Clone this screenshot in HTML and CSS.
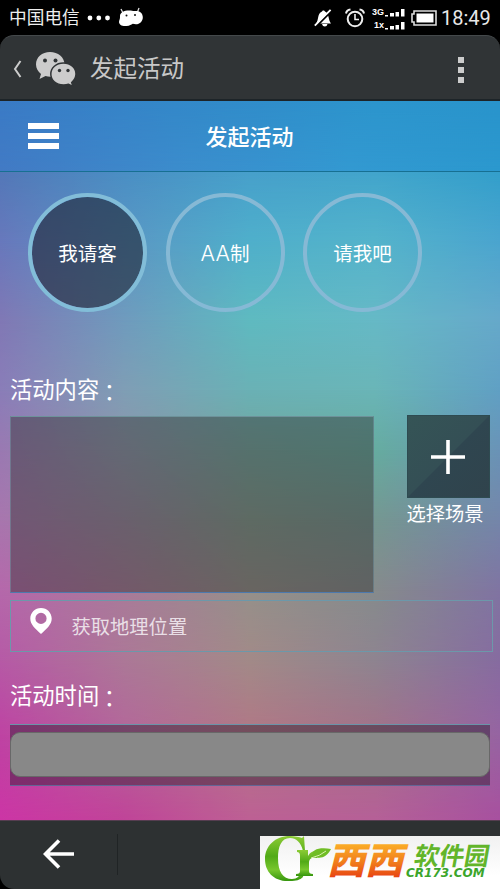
FILE: index.html
```html
<!DOCTYPE html>
<html lang="zh-CN">
<head>
<meta charset="utf-8">
<title>发起活动</title>
<link rel="stylesheet" href="styles.css">
</head>
<body>
<div class="phone">
  <div class="status">
    <span class="carrier">中国电信</span>
    <svg class="dots" width="24" height="6" viewBox="0 0 24 6" fill="#fff"><circle cx="3" cy="3" r="2.4"/><circle cx="11.8" cy="3" r="2.4"/><circle cx="20.5" cy="3" r="2.4"/></svg>
    <svg class="droid" width="26" height="20" viewBox="0 0 26 20"><path d="M3 2l2 4M21 1l-1.500 4" stroke="#ddd" stroke-width="1.300"/><path d="M2 9C2 5.500 6 3.500 11 3.500c3 0 4 .7 6 .5 5-.5 7.500 2 7.800 6 .2 4-2.800 7.300-7 7.300l-3-.5C13 17.500 12 19 8.500 19 4 19.500 1 17.500 1 15c0-2 1.300-3 1-6z" fill="#fff"/><circle cx="8.500" cy="8.500" r="1" fill="#111"/><circle cx="17" cy="8" r="1" fill="#111"/></svg>
    <div class="status-right">
      <svg class="bell" width="18" height="18" viewBox="0 0 18 18"><path d="M2 14.500C5 11 3 4.500 8 2.500 8.300 1 10.500 1 11 2.500c4.500 2 3 8.500 6 12z" fill="#fff"/><path d="M8 15h5.500q-.5 2.500-2.700 2.500T8 15z" fill="#fff"/><path d="M1.500 18L18 1.500" stroke="#000" stroke-width="2.200"/><path d="M.8 16.600L16.600.8" stroke="#fff" stroke-width="1.800"/></svg>
      <svg class="alarm" width="20" height="20" viewBox="0 0 20 20" fill="none" stroke="#eee"><circle cx="10" cy="11" r="7.300" stroke-width="2"/><path d="M10 6v5.500h4" stroke-width="1.600"/><path d="M1 5.500Q1.500 2 5.500 1.500M14.500 1.500Q18.500 2 19 5.500" stroke-width="2"/></svg>
      <div class="signals">
        <div class="signal"><span>3G</span><svg width="20" height="8" viewBox="0 0 20 8" fill="#fff"><path d="M0 6h3v1.500H0zM5 4h4v3.500H5zM10.500 3h3.500v4.500h-3.500zM16 0h3.500v7.500H16z"/></svg></div>
        <div class="signal"><span>1x</span><svg width="20" height="8" viewBox="0 0 20 8" fill="#fff"><path d="M0 6h3v1.500H0zM5 4h4v3.500H5zM10.500 3h3.500v4.500h-3.500zM16 0h3.500v7.500H16z"/></svg></div>
      </div>
      <svg class="battery" width="26" height="16" viewBox="0 0 26 16"><path d="M3 1h22v14H3v-3H1V4h2z" fill="none" stroke="#ddd" stroke-width="1.600"/><path d="M5.500 3.500h17v9h-17z" fill="#fff"/></svg>
      <span class="clock">18:49</span>
    </div>
  </div>

  <div class="appbar">
    <svg class="back" width="9" height="18" viewBox="0 0 9 18"><path d="M7.500 1L2 9l5.500 8" fill="none" stroke="#ccc" stroke-width="2"/></svg>
    <svg class="wechat" width="42" height="36" viewBox="0 0 42 36"><path d="M15 1C7 1 1 6 1 13.500c0 4 2 7 5 9.500l-1.500 5 6-3c3 1 7 1 9 0C26 24 29.500 19 29.500 13.500 29.500 6 23 1 15 1z" fill="#ccc"/><path d="M28.500 12C21 12 15.800 17 15.800 23s5 11 12.700 11c2 0 3.500-.2 5-.8l4.500 2.300-1.300-4C39.500 29 41 26.500 41 23c0-6-5.200-11-12.500-11z" fill="#ccc" stroke="#303436" stroke-width="1.500"/><g fill="#303436"><circle cx="10" cy="9.500" r="2"/><circle cx="20.500" cy="9.500" r="2"/><circle cx="24.500" cy="19.500" r="1.700"/><circle cx="33" cy="19.500" r="1.700"/></g></svg>
    <span class="app-title">发起活动</span>
    <span class="overflow"><i></i><i></i><i></i></span>
  </div>

  <header class="header">
    <span class="menu"><i></i><i></i><i></i></span>
    <h1>发起活动</h1>
  </header>

  <main class="content">
    <div class="backdrop">
      <div class="band b1"></div><div class="band b2"></div><div class="band b3"></div><div class="band b4"></div><div class="band b5"></div>
      <div class="band b6"></div><div class="band b7"></div><div class="band b8"></div><div class="band b9"></div>
    </div>
    <div class="form">
      <div class="modes">
        <div class="mode active">我请客</div>
        <div class="mode"><span class="latin">AA</span>制</div>
        <div class="mode">请我吧</div>
      </div>
      <div class="label">活动内容<span class="colon" lang="zh-TW">：</span></div>
      <div class="row">
        <div class="textarea"></div>
        <div class="scene">
          <div class="add"><svg width="34" height="34" viewBox="0 0 34 34"><path d="M17 0v34M0 17h34" stroke="#fff" stroke-width="3.600"/></svg></div>
          <span>选择场景</span>
        </div>
      </div>
      <div class="location">
        <svg width="22" height="26" viewBox="0 0 22 26"><path fill-rule="evenodd" d="M11 0C5 0 .3 4.700.3 10.500c0 6 4.700 10 10.700 15.500 6-5.500 10.700-9.500 10.700-15.500C21.700 4.700 17 0 11 0zm0 4.800a5.600 5.600 0 110 11.200 5.600 5.600 0 010-11.200z" fill="#fff"/></svg>
        <span>获取地理位置</span>
      </div>
      <div class="label time">活动时间<span class="colon" lang="zh-TW">：</span></div>
      <div class="time-box"><div class="time-input"></div></div>
    </div>
  </main>

  <footer class="navbar">
    <div class="nav-back"><svg width="32" height="30" viewBox="0 0 32 30"><path d="M31 15H3M16 1.500L2.500 15 16 28.500" fill="none" stroke="#fff" stroke-width="3.600"/></svg></div>
    <div class="watermark">
      <svg class="leaf" width="68" height="50" viewBox="0 0 68 50">
        <defs><linearGradient id="g" x1="0" y1="0" x2="0" y2="1"><stop offset="0" stop-color="#8ccb35"/><stop offset=".45" stop-color="#51aa17"/><stop offset=".75" stop-color="#77c62d"/><stop offset="1" stop-color="#35950e"/></linearGradient></defs>
        <path d="M39 0L40 15h-2C36 6 31 2 25 2 16 2 13 11 13 22c0 14 5 21 14 21 5 0 8-3 9-8h3l-1 6c-3 3-7 4-13 4C9 46 0 36 0 23S10 0 25 0c5 0 9 1 12 2z" fill="url(#g)"/>
        <path d="M32 14h11v6c2-4 5-5 9-5v7c-5-1-8 0-8 5v8c0 2 1 3 4 3v2H31v-2c3 0 4-1 4-3V20c0-3-1-4-3-4z" fill="url(#g)"/>
        <path d="M48 20c-3-7 8-9 18-7-4 8-11 11-18 7z" fill="#70bd25"/><path d="M46 22q9-2 15-7" fill="none" stroke="#daf0ae"/>
      </svg>
      <svg class="xixi" width="90" height="50" viewBox="0 0 90 50">
        <defs><linearGradient id="o" x1="0" y1="0" x2="0" y2="1"><stop offset=".25" stop-color="#fbad27"/><stop offset=".6" stop-color="#f07a1b"/><stop offset=".9" stop-color="#e73c11"/></linearGradient></defs>
        <text transform="translate(1 38) skewX(-14)" textLength="76" lengthAdjust="spacingAndGlyphs" fill="url(#o)">西西</text>
      </svg>
      <div class="brand"><span class="brand-cn">软件园</span><span class="brand-url">CR173.COM</span></div>
    </div>
  </footer>
</div>
</body>
</html>
```
FILE: styles.css
```css
* { box-sizing: border-box; }
body { margin: 0; background: #000; }
.phone {
  width: 500px; height: 889px; overflow: hidden;
  display: flex; flex-direction: column;
  font-family: "Noto Sans CJK SC", sans-serif; color: #fff;
}
svg { display: block; flex: none; }

.status { height: 35px; display: flex; align-items: center; padding: 0 9px; flex: none; }
.carrier { font-size: 17.700px; line-height: 32px; margin-top: -3px; color: #eee; white-space: nowrap; }
.dots { margin-left: 7px; }
.droid { margin-left: 7px; margin-top: -2px; }
.status-right { margin-left: auto; display: flex; align-items: center; }
.bell { margin-top: 1px; }
.alarm { margin-left: 13px; }
.signals { margin-left: 6px; width: 34px; display: flex; flex-direction: column; gap: 4px; padding-top: 3px; }
.signal { height: 9px; display: flex; justify-content: flex-end; align-items: center; }
.signal span { font: bold 9px/9px "Liberation Sans", sans-serif; margin-right: 1px; }
.battery { margin-left: 6px; }
.clock { margin-left: 4px; font: 20px/35px Roboto, sans-serif; color: #e8e8e8; width: 50px; white-space: nowrap; padding-top: 2px; }

.appbar {
  height: 66px; flex: none; background: #303436; border-radius: 14px 14px 0 0;
  border-top: 1px solid #44494b; border-bottom: 2px solid #1d2428;
  display: flex; align-items: center; padding: 0 36px 0 13px;
}
.back { margin-top: 2px; }
.wechat { margin-left: 13px; margin-top: 2px; }
.app-title { margin-left: 13px; font-size: 23.500px; line-height: 58px; margin-top: -2px; color: #c8c8c8; }
.overflow { margin-left: auto; display: flex; flex-direction: column; gap: 4px; margin-top: 4px; }
.overflow i { width: 6px; height: 6px; background: #ccc; }

.header {
  height: 71px; flex: none; display: grid; grid-template-columns: 59px 1fr 59px; align-items: center;
  border-bottom: 1px solid #177092; position: relative;
  background: linear-gradient(90deg, #3a7bc6, #3388c9 35%, #2c95cd 75%, #2994cc);
}
.header::before {
  content: ""; position: absolute; inset: 0;
  background: linear-gradient(90deg, #427ac4, #3c8ccc 35%, #3399d1 70%, #2b98ce);
  -webkit-mask-image: linear-gradient(transparent, #000); mask-image: linear-gradient(transparent, #000);
}
.header > * { position: relative; }
.menu { width: 31px; margin-left: 28px; display: flex; flex-direction: column; gap: 4px; }
.menu i { height: 6px; background: #fff; }
.header h1 { margin: -2px 0 0 -1px; text-align: center; font-size: 22px; line-height: 68px; font-weight: 500; }

.content { height: 648px; flex: none; display: grid; }
.content > * { grid-area: 1 / 1; min-width: 0; }
.form { position: relative; padding: 21px 10px 0; }

.backdrop {
  --r0: linear-gradient(90deg, #5378b8, #4a8fc4, #47a0cb, #42a5cc, #339fcb);
  --r1: linear-gradient(90deg, #6778bc, #5a97c4, #4fafcb, #54b3cb, #4aa5cf);
  --r2: linear-gradient(90deg, #8078b5, #6f9bbd, #5fbac0, #66b9c6, #66a9ca);
  --r3: linear-gradient(90deg, #8a7db8, #7f9eb5, #6ab1b5, #6ab5b7, #60a0c4);
  --r4: linear-gradient(90deg, #9a79b2, #8c97ab, #73a79f, #66aca0, #6a93b7);
  --r5: linear-gradient(90deg, #a876ae, #98889f, #829a8d, #759791, #7486aa);
  --r6: linear-gradient(90deg, #b568ab, #a97b99, #95908a, #868b8c, #8074a2);
  --r7: linear-gradient(90deg, #b65aa6, #ac7897, #a28a88, #8e8490, #866ca0);
  --r8: linear-gradient(90deg, #be43a3, #b3679a, #b17786, #a37289, #9664a2);
  --r9: linear-gradient(90deg, #cc35a5, #c04498, #bd6094, #b56097, #a8509f);
  display: flex; flex-direction: column;
}
.band { background: var(--from); position: relative; }
.band::after {
  content: ""; position: absolute; inset: 0; background: var(--to);
  -webkit-mask-image: linear-gradient(transparent, #000); mask-image: linear-gradient(transparent, #000);
}
.b1 { --from: var(--r0); --to: var(--r1); height: 68px; }
.b2 { --from: var(--r1); --to: var(--r2); height: 80px; }
.b3 { --from: var(--r2); --to: var(--r3); height: 70px; }
.b4 { --from: var(--r3); --to: var(--r4); height: 60px; }
.b5 { --from: var(--r4); --to: var(--r5); height: 70px; }
.b6 { --from: var(--r5); --to: var(--r6); height: 70px; }
.b7 { --from: var(--r6); --to: var(--r7); height: 70px; }
.b8 { --from: var(--r7); --to: var(--r8); height: 75px; }
.b9 { --from: var(--r8); --to: var(--r9); height: 85px; }

.modes { display: flex; gap: 18.500px; padding-left: 18px; }
.mode {
  width: 119px; height: 119px; border-radius: 50%; border: 4px solid #86b9d5;
  display: flex; align-items: center; justify-content: center; font-size: 19.500px;
}
.mode.active { border-color: #82bdd8; background: rgba(30, 35, 50, .6); background-clip: padding-box; }
.latin { font: 300 21.500px/28px Inter, sans-serif; }

.label { margin-top: 60px; height: 32px; line-height: 32px; font-size: 22.300px; white-space: nowrap; }
.colon { display: inline-block; font-family: "Noto Sans CJK TC", sans-serif; transform: translate(-1px, 3px); }
.row { margin-top: 11px; display: flex; justify-content: space-between; }
.textarea {
  width: 364px; height: 177px; margin-top: 1px; background: rgba(48, 46, 46, .44);
  border: 1px solid rgba(115, 150, 165, .5); border-top-color: #6d929a; border-bottom-color: #4d79ad;
}
.scene { width: 83.500px; }
.add {
  height: 83px; display: flex; align-items: center; justify-content: center; border: 1px solid #2e4b51;
  background: linear-gradient(135deg, #355456, #344f55 49.700%, #2f4650 50.300%, #30434c);
}
.scene span { display: block; font-size: 19.300px; line-height: 30px; white-space: nowrap; }
.location {
  width: 483px; height: 52px; margin-top: 7px; border: 1px solid #6c98aa;
  display: flex; padding-left: 19px;
}
.location svg { margin-top: 7px; }
.location span { margin-left: 19.500px; font-size: 19.300px; line-height: 51px; color: #e9dfe6; }
.label.time { margin-top: 26px; }
.time-box {
  margin-top: 14px; height: 62px; padding: 7px 0; background: rgba(30, 20, 35, .42);
  border-top: 1px solid #6a94a9; border-bottom: 1px solid #636696;
}
.time-input { height: 45px; background: #888; border: 1px solid #686868; border-radius: 10px; }

.navbar { height: 69px; flex: none; display: flex; background: #2d3132; border-top: 1px solid #553d50; border-radius: 0 0 0 14px; }
.nav-back { width: 118px; padding: 18px 0 0 43px; background: linear-gradient(#202425, #202425) right 13px / 1px 41px no-repeat; }
.watermark {
  width: 240px; height: 53px; margin: 15px 0 0 auto; background: linear-gradient(#f1f1f1, #fff 75%);
  display: flex; padding-left: 5px;
}
.leaf { margin-right: -7px; }
.xixi { margin-right: -10px; overflow: visible; }
.xixi text { font-size: 37px; font-weight: 900; }
.brand { display: flex; flex-direction: column; }
.brand-cn { font-size: 25px; line-height: 28px; margin: 4px 0 0 9px; font-weight: 700; color: #62b52a; transform: skewX(-10deg); white-space: nowrap; }
.brand-url { font: italic bold 12px/12px "DejaVu Sans", sans-serif; color: #3ba52b; white-space: nowrap; margin-top: -1px; }
```
